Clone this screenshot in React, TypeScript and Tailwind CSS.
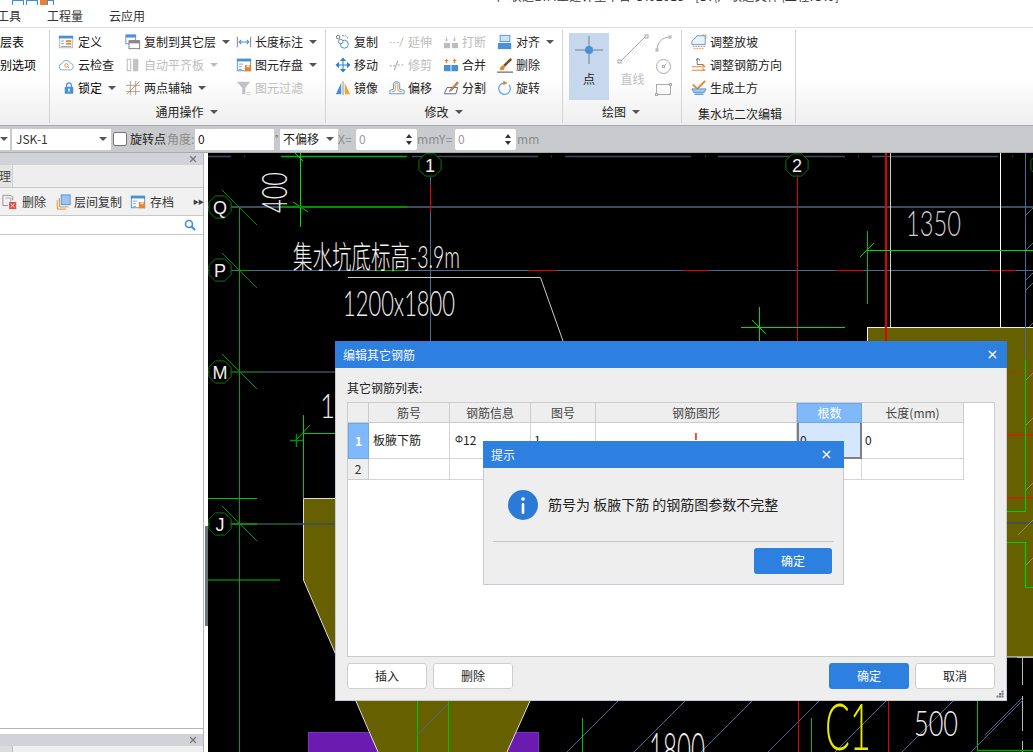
import { ReactNode } from "react";
import { X } from "lucide-react";

const BLUE = "#4a90d9";
const ORANGE = "#e8842c";
const GRAY = "#b4b4b4";

function Svg({ children, size = 18 }: { children: ReactNode; size?: number }) {
  return (
    <svg width={size} height={size} viewBox="0 0 18 18" fill="none" className="shrink-0">
      {children}
    </svg>
  );
}

const icons: Record<string, ReactNode> = {
  define: (
    <>
      <rect x="1.5" y="2.5" width="15" height="13" fill="#fff" stroke="#a9b4c0" />
      <rect x="1" y="2" width="16" height="3" fill={BLUE} />
      <rect x="9" y="7" width="6" height="2" fill={ORANGE} />
      <rect x="9" y="10" width="6" height="2" fill={ORANGE} />
      <path d="M3 8h4M3 11h4M3 14h12" stroke="#8a9aa8" />
    </>
  ),
  cloud: (
    <>
      <path d="M5 14.5a3.5 3.5 0 0 1-.5-7A5 5 0 0 1 14 7a3.8 3.8 0 0 1 0 7.5z" stroke="#62a6e4" fill="#fff" />
      <circle cx="9.5" cy="9.5" r="2" stroke={ORANGE} />
      <path d="M11 11l1.5 1.5" stroke={ORANGE} />
    </>
  ),
  lock: (
    <>
      <path d="M6 8V5.5a3 3 0 0 1 6 0V8" stroke={BLUE} strokeWidth="1.5" />
      <rect x="3.5" y="7.5" width="11" height="9" rx="1.5" fill={BLUE} />
      <circle cx="9" cy="11" r="1.4" fill="#fff" />
      <rect x="8.4" y="11" width="1.2" height="3" fill="#fff" />
    </>
  ),
  copyFloor: (
    <>
      <rect x="1" y="1" width="11" height="10" fill="#fff" stroke={BLUE} />
      <rect x="1" y="1" width="11" height="3" fill={BLUE} />
      <rect x="4.5" y="7.5" width="12" height="9" fill="#fff" stroke="#777" />
      <rect x="4.5" y="7.5" width="12" height="3" fill="#888" />
    </>
  ),
  autoAlign: (
    <>
      <rect x="2.5" y="2.5" width="4" height="13" stroke={GRAY} fill="#fff" />
      <rect x="9" y="2" width="6" height="14" fill="#c4c4c4" />
    </>
  ),
  twoPoint: (
    <>
      <path d="M1 6h16M1 13h16M6 1v16M12 1v16" stroke="#8a8a8a" strokeWidth=".8" />
      <path d="M2 16L16 2" stroke={ORANGE} />
    </>
  ),
  lengthDim: (
    <>
      <path d="M1.5 3v12M16.5 3v12" stroke="#6a7a8a" />
      <path d="M3.5 9h11M6 6.5L3.5 9 6 11.5M12 6.5L14.5 9 12 11.5" stroke={BLUE} strokeWidth="1.2" />
    </>
  ),
  saveElem: (
    <>
      <rect x="1.5" y="2.5" width="15" height="13" fill="#fff" stroke={BLUE} />
      <rect x="1" y="2" width="16" height="3" fill={BLUE} />
      <path d="M3 8h5M3 11h4M3 14h4" stroke="#8a9aa8" />
      <rect x="10" y="9" width="7" height="7" fill={ORANGE} />
      <rect x="12" y="9.5" width="3" height="2" fill="#fff" />
    </>
  ),
  filter: (
    <>
      <path d="M1 2h15l-5.5 7v7H7V9z" fill="#c2c2c2" />
      <path d="M12 14h4M12 16.5h4" stroke="#d0d0d0" />
    </>
  ),
  copy: (
    <>
      <circle cx="3.5" cy="3.5" r="2" stroke="#666" />
      <path d="M8 2h4l2 2v1" stroke="#666" strokeDasharray="2 1" />
      <circle cx="10.5" cy="11.5" r="4.5" stroke="#3f7fc4" />
      <circle cx="6.5" cy="8.5" r="2.5" fill="#fff" stroke="#3f7fc4" />
    </>
  ),
  extend: <path d="M1 9.5h2M5 9.5h2M9 9.5h2M12 14l4-10" stroke={GRAY} />,
  breakIcon: (
    <>
      <rect x="1" y="10" width="7" height="6" fill="#bdbdbd" />
      <rect x="10" y="10" width="7" height="6" fill="#bdbdbd" />
      <path d="M4 3v5M2.5 6L4 8l1.5-2M13 3v5M11.5 6L13 8l1.5-2" stroke="#bdbdbd" />
    </>
  ),
  align: (
    <>
      <rect x="3.5" y="1.5" width="11" height="7" fill="#cfe0f4" stroke={BLUE} />
      <rect x="1" y="10" width="15" height="7" fill={BLUE} />
    </>
  ),
  move: (
    <path
      d="M9 2v14M2 9h14M9 1.5L6.8 4h4.4zM9 16.5L6.8 14h4.4zM1.5 9L4 6.8v4.4zM16.5 9L14 6.8v4.4z"
      stroke="#2f7fd6"
      fill="#2f7fd6"
      strokeWidth="1.2"
    />
  ),
  trim: <path d="M1 10h2M5 10h2M10 9h2M14 9h2M6 15l4-11" stroke="#8f8f8f" />,
  merge: (
    <>
      <rect x="1" y="9" width="16" height="7" fill={BLUE} />
      <path d="M9 9v7" stroke="#fff" />
      <path d="M4 2v5M2 4h4M13 2v5M11 4h4" stroke={ORANGE} strokeWidth="1.4" />
    </>
  ),
  erase: (
    <>
      <path d="M7 9L15 1l2 2-8 8z" fill="#7a4a2a" />
      <path d="M4 11l3-2 2 2-1.5 3.5L3 15z" fill={ORANGE} />
      <path d="M0 17h18" stroke="#333" />
    </>
  ),
  mirror: (
    <>
      <path d="M7 3v13H1z" fill={BLUE} />
      <path d="M11 3v13h6z" fill="#f0a63a" />
      <path d="M9 1v16" stroke="#888" />
    </>
  ),
  offset: (
    <>
      <path d="M1 15.5v-4l4-1V4a3 3 0 0 1 3-2h1a3 3 0 0 1 3 2v6.5l5 1v4z" fill="#fff" stroke={BLUE} />
      <path d="M3 13.5l4-1.3V5a1.5 1.5 0 0 1 3 0v7.2l5 1.3" stroke={ORANGE} />
    </>
  ),
  split: (
    <>
      <path d="M4.5 8.500h12l-2 7h-13z" stroke="#4a5a78" fill="#fff" />
      <path d="M8 11l8-9 1.5 1.5-8 8.500L7 13z" fill={ORANGE} stroke="#555" strokeWidth=".5" />
    </>
  ),
  rotate: (
    <>
      <path d="M8 3.200a6.500 6.500 0 1 0 5.500 2.300" stroke="#62a6e4" strokeWidth="1.4" />
      <path d="M7 .5l5 3-5 2.500z" fill={ORANGE} />
    </>
  ),
  slope: (
    <>
      <path d="M1 8l6-6h9v10H1z" fill="#eaf3fc" stroke={BLUE} />
      <path d="M13 1h4v4M2 14h14M3 16.5h12" stroke={ORANGE} strokeDasharray="2 1" />
    </>
  ),
  direction: (
    <>
      <path d="M7 1.5v7h7" stroke="#666" />
      <path d="M6 4a2 2 0 0 1 4 0" stroke="#666" />
      <path d="M1 11h15M1 15h15M13 9l3 2M13 13l3 2" stroke={ORANGE} strokeWidth="1.2" />
    </>
  ),
  earth: (
    <>
      <path d="M2 5l5 5L16 1" stroke={ORANGE} strokeWidth="2" />
      <path d="M1 10h16l-2 4H3z" fill="#a8c8ea" stroke={BLUE} />
      <path d="M4 16h10" stroke={BLUE} strokeWidth="1.5" />
    </>
  ),
  docDelete: (
    <>
      <path d="M1 1.5h9l2 2V7M1 1.5V13h6" stroke="#888" />
      <path d="M4 4.5h6V9" stroke="#aaa" />
      <rect x="8" y="9" width="8" height="8" fill="#d9534f" />
      <path d="M10 11l4 4M14 11l-4 4" stroke="#fff" />
    </>
  ),
  floorCopy: (
    <>
      <rect x="7" y="1" width="10" height="11" fill="#9cc4ef" stroke={BLUE} />
      <path d="M5 4.5v10h10M2.5 7v10h10" stroke={ORANGE} />
    </>
  ),
};

function Ico({ name, size }: { name: string; size?: number }) {
  return <Svg size={size}>{icons[name]}</Svg>;
}

function Caret({ off }: { off?: boolean }) {
  return (
    <span
      className={`ml-[6px] h-0 w-0 border-x-[4px] border-t-[4px] border-x-transparent ${
        off ? "border-t-[#bbb]" : "border-t-[#555]"
      }`}
    />
  );
}

function Tool({
  icon,
  label,
  caret,
  off,
  gap = "w-[19px]",
}: {
  icon: string;
  label: string;
  caret?: boolean;
  off?: boolean;
  gap?: string;
}) {
  return (
    <div className="flex h-[23px] items-center whitespace-nowrap">
      <span className={`flex shrink-0 items-center ${gap}`}>
        <Ico name={icon} size={16} />
      </span>
      <span className={off ? "text-[#bdbdbd]" : "text-[#222]"}>{label}</span>
      {caret && <Caret off={off} />}
    </div>
  );
}

function Group({
  className,
  title,
  titleClass = "",
  caret,
  children,
}: {
  className: string;
  title: string;
  titleClass?: string;
  caret?: boolean;
  children: ReactNode;
}) {
  return (
    <div className={`mt-[2px] flex h-[93px] shrink-0 flex-col border-r border-[#d4d4d4] ${className}`}>
      <div className="h-[70px]">{children}</div>
      <div className={`flex flex-1 items-center justify-center text-[#222] ${titleClass}`}>
        {title}
        {caret && <Caret />}
      </div>
    </div>
  );
}

function Ribbon() {
  return (
    <div className="flex h-[97px] items-start bg-gradient-to-b from-white from-50% to-[#efefef] text-[12px]">
      <Group className="w-[50px]" title="">
        <div className="flex h-[23px] items-center">层表</div>
        <div className="flex h-[23px] items-center">别选项</div>
      </Group>
      <Group className="w-[276px] pl-[8px]" title="通用操作" titleClass="pr-[10px]" caret>
        <div className="grid grid-cols-[67px_111px_89px]">
          <Tool icon="define" label="定义" gap="w-[20px]" />
          <Tool icon="copyFloor" label="复制到其它层" caret />
          <Tool icon="lengthDim" label="长度标注" caret />
          <Tool icon="cloud" label="云检查" gap="w-[20px]" />
          <Tool icon="autoAlign" label="自动平齐板" caret off />
          <Tool icon="saveElem" label="图元存盘" caret />
          <div className="flex h-[23px] items-center pl-[4px]">
            <span className="flex w-[16px] items-center">
              <Ico name="lock" size={14} />
            </span>
            锁定
            <Caret />
          </div>
          <Tool icon="twoPoint" label="两点辅轴" caret />
          <Tool icon="filter" label="图元过滤" off />
        </div>
      </Group>
      <Group className="w-[237px] pl-[9px]" title="修改" titleClass="pr-[10px]" caret>
        <div className="grid grid-cols-[54px_54px_54px_60px]">
          <Tool icon="copy" label="复制" />
          <Tool icon="extend" label="延伸" off />
          <Tool icon="breakIcon" label="打断" off />
          <Tool icon="align" label="对齐" caret />
          <Tool icon="move" label="移动" />
          <Tool icon="trim" label="修剪" off />
          <Tool icon="merge" label="合并" />
          <Tool icon="erase" label="删除" />
          <Tool icon="mirror" label="镜像" />
          <Tool icon="offset" label="偏移" />
          <Tool icon="split" label="分割" />
          <Tool icon="rotate" label="旋转" />
        </div>
      </Group>
      <Group className="w-[119px] pl-[6px]" title="绘图" titleClass="pr-[8px]" caret>
        <div className="flex pt-[3px]">
          <div className="flex h-[67px] w-[40px] flex-col items-center bg-[#c7d8ee] pt-[2px]">
            <svg width="30" height="30" viewBox="0 0 30 30">
              <path d="M15 1v28M1 15h28" stroke="#6f7f90" />
              <circle cx="15" cy="15" r="4" fill={BLUE} />
            </svg>
            <span className="mt-[5px] text-[#222]">点</span>
          </div>
          <div className="ml-[6px] flex w-[35px] flex-col items-center">
            <svg width="32" height="32" viewBox="0 0 32 32">
              <path d="M3 29L29 3" stroke="#a8a8a8" />
              <rect x="1" y="27" width="3" height="3" fill="#fff" stroke="#a8a8a8" />
              <rect x="28" y="2" width="3" height="3" fill="#fff" stroke="#a8a8a8" />
            </svg>
            <span className="mt-[5px] text-[#c0c0c0]">直线</span>
          </div>
          <div className="-mt-[1px] ml-[5px] flex flex-col">
            <span className="flex h-[23px] items-center">
              <svg width="17" height="17" viewBox="0 0 17 17" fill="none" stroke="#aaa">
                <path d="M2 15C2 8 7 2 15 2" />
                <rect x="1" y="14" width="2" height="2" fill="#fff" />
                <rect x="14" y="1" width="2" height="2" fill="#fff" />
              </svg>
            </span>
            <span className="flex h-[23px] items-center">
              <svg width="17" height="17" viewBox="0 0 17 17" fill="none" stroke="#aaa">
                <circle cx="8.5" cy="8.5" r="7" />
                <path d="M8.5 8.5l3-3" />
                <rect x="7.5" y="7.5" width="2" height="2" fill="#fff" />
              </svg>
            </span>
            <span className="flex h-[23px] items-center">
              <svg width="17" height="17" viewBox="0 0 17 17" fill="none" stroke="#aaa">
                <rect x="1.5" y="3.5" width="14" height="10" />
                <rect x="14.5" y="2.5" width="2" height="2" fill="#fff" />
                <rect x=".5" y="12.5" width="2" height="2" fill="#fff" />
              </svg>
            </span>
          </div>
        </div>
      </Group>
      <Group className="w-[114px] pl-[9px]" title="集水坑二次编辑" titleClass="pr-[6px] pt-[4px]">
        <Tool icon="slope" label="调整放坡" />
        <Tool icon="direction" label="调整钢筋方向" />
        <Tool icon="earth" label="生成土方" />
      </Group>
    </div>
  );
}

function Spin({ className, value }: { className: string; value: string }) {
  return (
    <div className={`flex h-[21px] items-center justify-between rounded-[2px] bg-white pl-[3px] text-[#999] ${className}`}>
      {value}
      <span className="flex flex-col gap-[3px] pr-[5px]">
        <span className="h-0 w-0 border-x-[3px] border-b-[4px] border-x-transparent border-b-[#333]" />
        <span className="h-0 w-0 border-x-[3px] border-t-[4px] border-x-transparent border-t-[#333]" />
      </span>
    </div>
  );
}

function Combo({ className, value }: { className: string; value?: string }) {
  return (
    <div className={`flex h-[21px] items-center justify-between bg-white pl-[3px] pr-[4px] text-[#222] ${className}`}>
      <span>{value}</span>
      <span className="h-0 w-0 border-x-[4px] border-t-[4px] border-x-transparent border-t-[#555]" />
    </div>
  );
}

function OptionsBar() {
  return (
    <div className="flex h-[28px] items-center border-y border-[#a9abae] bg-[#c8cacd] text-[12px]">
      <Combo className="w-[10px] overflow-hidden !pl-0" />
      <Combo className="ml-[2px] w-[99px] !pl-[4px] !text-[#333]" value="JSK-1" />
      <span className="ml-[2px] h-[14px] w-[14px] rounded-[2px] border border-[#777] bg-white" />
      <span className="ml-[3px] text-[#222]">旋转点</span>
      <span className="ml-[1px] w-[28px] text-[#8c8c8c]">角度:</span>
      <div className="flex h-[21px] w-[79px] items-center bg-white pl-[3px] text-[#222]">0</div>
      <span className="ml-[1px] w-[5px] text-[9px] text-[#666]">°</span>
      <Combo className="w-[58px]" value="不偏移" />
      <span className="w-[18px] text-[#8c8c8c]">X=</span>
      <Spin className="w-[61px]" value="0" />
      <span className="w-[38px] text-[#8c8c8c]">mmY=</span>
      <Spin className="w-[61px]" value="0" />
      <span className="ml-[1px] text-[#8c8c8c]">mm</span>
    </div>
  );
}

function PanelHead() {
  return (
    <div className="flex h-[12px] shrink-0 items-center justify-end bg-[#d2d3d8] pr-[5px]">
      <X size={10} strokeWidth={3} className="text-[#777]" />
    </div>
  );
}

function LeftPanel() {
  return (
    <div className="flex w-[204px] shrink-0 flex-col border-r border-[#b5b5b5] bg-white text-[12px]">
      <PanelHead />
      <div className="flex h-[22px] bg-[#eeeeee]">
        <div className="flex w-[13px] items-center justify-end overflow-hidden border-r border-[#cfcfcf] bg-[#e4e4e4] pr-[1px] text-[#444]">
          <span className="shrink-0">理</span>
        </div>
      </div>
      <div className="flex h-[29px] items-center border-y border-[#c8c8c8] bg-[#f1f1f1] pl-[2px] text-[#333]">
        <Ico name="docDelete" size={16} />
        <span className="ml-[4px] w-[33px] shrink-0">删除</span>
        <Ico name="floorCopy" size={16} />
        <span className="ml-[3px] w-[56px] shrink-0">层间复制</span>
        <Ico name="saveElem" size={16} />
        <span className="ml-[4px] w-[43px] shrink-0">存档</span>
        <span className="text-[6px] leading-none tracking-[-1px] text-[#444]">▶▶</span>
      </div>
      <div className="flex h-[19px] items-center justify-end border-b border-[#c8c8c8] pr-[7px]">
        <svg width="12" height="12" viewBox="0 0 12 12" fill="none" stroke="#3f8fd8" strokeWidth="1.6">
          <circle cx="5" cy="5" r="3.5" />
          <path d="M7.5 7.5L11 11" strokeWidth="2" />
        </svg>
      </div>
      <div className="flex-1 border-b border-[#b5b5b5]" />
      <div className="h-[5px] shrink-0" />
      <PanelHead />
      <div className="flex h-[6px] shrink-0 bg-[#eeeeee]">
        <div className="w-[13px] border-r border-[#bdbdbd] bg-[#dcdcdc]" />
      </div>
    </div>
  );
}

const SLATE = "#3c4c60";
const LINE = "#4a6a96";
const DK = "#078a07";
const BR = "#00e000";

function Axis({ x, y, label }: { x: number; y: number; label: string }) {
  const r = 12;
  const pts = Array.from({ length: 8 }, (_, i) => {
    const a = (Math.PI / 4) * i + Math.PI / 8;
    return `${x + r * Math.cos(a)},${y + r * Math.sin(a)}`;
  }).join(" ");
  return (
    <>
      <polygon points={pts} fill="#000" stroke="#0a7a0a" />
      <text x={x} y={y + 7} textAnchor="middle" fontSize="18" fill="#eee" fontFamily="'Liberation Sans', sans-serif">
        {label}
      </text>
    </>
  );
}

function Thin(props: { x: number; y: number; w: number; size: number; fill?: string; children: string }) {
  return (
    <text
      x={props.x}
      y={props.y}
      fontSize={props.size}
      textLength={props.w}
      lengthAdjust="spacingAndGlyphs"
      fill={props.fill ?? "#f2f2f2"}
      fontWeight={300}
      fontFamily="'Lato', 'Noto Sans CJK SC', sans-serif"
    >
      {props.children}
    </text>
  );
}

function Canvas() {
  const dashes = [
    [208, 231],
    [412, 538],
    [565, 691],
    [718, 845],
    [872, 998],
  ];
  const dots = [244, 551, 705, 858, 1012];
  const hatch = [619, 686, 753, 820, 887, 954, 1023];
  return (
    <svg viewBox="208 153 825 599" className="block h-full w-full bg-black">
      {dashes.map(([a, b]) => (
        <path key={a} d={`M${a} 156.5H${b}`} stroke={SLATE} strokeWidth="1.5" />
      ))}
      {dots.map((d) => (
        <path key={d} d={`M${d} 156.5h1`} stroke={SLATE} strokeWidth="1.5" />
      ))}
      <path d="M281 156.5H407" stroke="#00b000" strokeWidth="1.5" />
      <path d="M300.5 153V227M295 153l8 8M293 202l15 10" stroke={BR} fill="none" />

      <path d="M208 207H1033" stroke={SLATE} strokeWidth="2" />
      <path d="M281 207H407" stroke="#009000" strokeWidth="2" />
      <path d="M208 270.5H1033" stroke={LINE} />
      <path d="M208 372H335" stroke={SLATE} strokeWidth="1.5" />
      <path d="M230 372H263" stroke="#0a5a0a" strokeWidth="1.5" />

      <path d="M239.5 207V752" stroke="#00a000" />
      <path d="M222 190l35 35M222 253l35 35M222 354l35 35M222 506l35 35" stroke={DK} />
      <path d="M239 270.5H249M376 270.5H402" stroke="#00a000" />
      <path d="M529 270.5H556M683 270.5H709M836 270.5H863M989 270.5H1016" stroke="#e00000" />

      <path d="M430.5 177V341" stroke={LINE} />
      <path d="M430.5 185V212" stroke="#e00000" />
      <path d="M797.5 177V341" stroke="#e00000" />

      <path d="M886 153V341" stroke="#e00000" strokeWidth="2" />
      <path d="M890.5 153V327" stroke="#ccc" />
      <path d="M1000.5 153V327" stroke="#fff" />
      <path d="M1025.5 153V360" stroke={LINE} />

      <path d="M867 250.5H1033" stroke={BR} />
      <path d="M867.5 231V304" stroke="#00c000" />
      <path d="M860 257l14-14" stroke={BR} />
      <path d="M741 327.5H845M759.5 307V341M752 320l14 14" stroke={BR} fill="none" />

      <path d="M1026 215l7-7M1026 250l7-7M1026 290l7-7M1026 330l7-7M1026 280l7-7" stroke={LINE} />

      <rect x="867.5" y="327.5" width="170" height="329.5" fill="#666000" stroke="#eee" />
      <path d="M886 327V341" stroke="#e00000" strokeWidth="2" />
      <path d="M1007 372H1033" stroke="#a83a10" strokeDasharray="12 3" />
      <path d="M1007 435H1033M1007 498H1033" stroke="#d02000" strokeWidth="1.5" />
      <path d="M1025.5 320V360" stroke={LINE} />
      <path d="M1025.5 360V511.5H1007" stroke="#00d000" fill="none" />
      <path d="M1007 523H1033" stroke={SLATE} strokeWidth="1.5" />
      <path d="M1007 542.5H1025.5V587.5H1033" stroke="#00d000" fill="none" strokeWidth="1.2" />
      <path d="M1026 380l7-7M1026 425l7-7M1026 490l7-7M1018 535l15-15M1026 565l7-7" stroke="#8a8a70" />

      <path d="M1017 657.5H1033" stroke="#bbb" />
      <path d="M1022.5 658V685M1022.5 696V731M1022.5 741V752" stroke="#bbb" />
      <path d="M985 735l37-37" stroke={LINE} />
      <path d="M977 750.5H1033" stroke="#00a000" strokeWidth="1.5" />
      <path d="M977.5 701V750" stroke="#00c000" />

      <path d="M303.5 415V498M303 433.5H335M296 440l14-15" stroke="#00d000" fill="none" />
      <path d="M290 440.5H303M296.5 434V447" stroke="#0a8a0a" strokeWidth="1.5" fill="none" />
      <path d="M208 498.5H257M208 580H280" stroke="#00c000" />

      <rect x="308.5" y="732.5" width="230" height="30" fill="#6a1cb0" stroke="#7a30c0" />
      <polygon points="303.5,498.5 420,498.5 530,640 530,701 507,752 378,752 303.5,580" fill="#666000" />
      <path d="M335 498.5H303.5V580L378 752M530 701L507 752" stroke="#ddd" fill="none" />
      <path d="M208 524H335" stroke={SLATE} strokeWidth="1.5" />
      <path d="M208 524H257" stroke="#00a000" strokeWidth="1.5" />
      <path d="M275 524H290" stroke="#0a5a0a" strokeWidth="1.5" />
      <path d="M417.5 701V752M448.5 701V752" stroke="#00c000" />
      <path d="M417 735l31-31" stroke={LINE} />

      {hatch.map((h) => (
        <path key={h} d={`M${h} 700L${h - 52} 752`} stroke={LINE} />
      ))}

      <path d="M582.5 718V752M811.5 718V752" stroke="#00c000" />
      <path d="M798.5 700V752M888.5 700V752" stroke="#e00000" />

      <Axis x={220} y={207} label="Q" />
      <Axis x={220} y={270} label="P" />
      <Axis x={220} y={372} label="M" />
      <Axis x={220} y={524} label="J" />
      <Axis x={430} y={165} label="1" />
      <Axis x={797} y={165} label="2" />
      <Axis x={1042} y={165} label="" />

      <g transform="rotate(-90 287 213)">
        <Thin x={287} y={213} w={41} size={36} fill="#eee">
          400
        </Thin>
      </g>
      <Thin x={293} y={268} w={167} size={31}>
        集水坑底标高-3.9m
      </Thin>
      <path d="M348 277.5H540.5L563 341" stroke="#ccc" fill="none" />
      <Thin x={343} y={316} w={112} size={36} fill="#eee">
        1200x1800
      </Thin>
      <Thin x={906} y={236} w={55} size={36} fill="#ccc">
        1350
      </Thin>
      <Thin x={320} y={418} w={30} size={34}>
        10
      </Thin>
      <Thin x={914} y={736} w={44} size={36} fill="#eee">
        500
      </Thin>
      <Thin x={649} y={767} w={56} size={48} fill="#eee">
        1800
      </Thin>
      <Thin x={825} y={750} w={46} size={66} fill="#e8e800">
        C1
      </Thin>
    </svg>
  );
}

function TitleBar({ title, closeRight }: { title: string; closeRight: string }) {
  return (
    <div className="flex h-[27px] items-center justify-between bg-[#2d7fe0] pl-[8px] text-[12px] text-[#f4f8ff]">
      {title}
      <X size={13} strokeWidth={2.5} className={`text-white ${closeRight}`} />
    </div>
  );
}

const HEAD = "flex items-center justify-center border-r border-b border-[#cccccc] bg-[#eeeeee] text-[#444]";
const CELL = "flex items-center border-r border-b border-[#d4d4d4] bg-white px-[3px] pb-[2px] text-[#222]";

function Btn({ children, primary, className = "" }: { children: string; primary?: boolean; className?: string }) {
  return (
    <button
      type="button"
      className={`flex h-[26px] w-[80px] items-center justify-center rounded-[3px] text-[12px] ${
        primary ? "bg-[#2d7fe0] text-white" : "border border-[#cfcfcf] bg-white text-[#222]"
      } ${className}`}
    >
      {children}
    </button>
  );
}

function RebarDialog() {
  return (
    <div className="absolute left-[335px] top-[341px] flex h-[360px] w-[672px] flex-col border-x border-b border-[#c5cad5] bg-[#eeeeee] text-[12px]">
      <div className="-mx-[1px]">
        <TitleBar title="编辑其它钢筋" closeRight="mr-[8px]" />
      </div>
      <div className="flex h-[34px] items-center pl-[11px] pt-[6px] text-[#222]">其它钢筋列表:</div>
      <div className="mx-[11px] h-[255px] border border-[#cccccc] bg-white">
        <div className="grid w-[616px] grid-cols-[21px_81px_81px_65px_201px_65px_102px] grid-rows-[20px_36px_21px]">
          <div className={HEAD} />
          <div className={HEAD}>筋号</div>
          <div className={HEAD}>钢筋信息</div>
          <div className={HEAD}>图号</div>
          <div className={HEAD}>钢筋图形</div>
          <div className="flex items-center justify-center border border-[#6fa8ea] bg-[#7fb9f9] text-white">根数</div>
          <div className={HEAD}>长度(mm)</div>

          <div className="flex items-center justify-center border border-[#6fa8ea] bg-[#7fb9f9] font-bold text-white">1</div>
          <div className={`${CELL} !pl-[4px]`}>板腋下筋</div>
          <div className={`${CELL} !pl-[5px]`}>
            <span className="mb-[2px] text-[10px]">Φ</span>
            <span>12</span>
          </div>
          <div className={CELL}>1</div>
          <div className={`${CELL} justify-center`}>
            <span className="mb-[6px] text-[9px] font-bold text-[#e00000]">I</span>
          </div>
          <div className="flex items-center border-2 border-t-0 border-[#808080] bg-[#d4e7fd] pl-[1px] text-[#222]">0</div>
          <div className={CELL}>0</div>

          <div className="flex items-center justify-center border-r border-b border-[#cccccc] bg-[#eeeeee] text-[#333]">2</div>
          <div className={CELL} />
          <div className={CELL} />
          <div className={CELL} />
          <div className={CELL} />
          <div className={CELL} />
          <div className={CELL} />
        </div>
      </div>
      <div className="flex justify-between px-[11px] pt-[6px]">
        <div className="flex gap-[6px]">
          <Btn>插入</Btn>
          <Btn>删除</Btn>
        </div>
        <div className="flex gap-[6px]">
          <Btn primary>确定</Btn>
          <Btn>取消</Btn>
        </div>
      </div>
      <svg width="8" height="8" viewBox="0 0 8 8" className="absolute bottom-[2px] right-[2px]" fill="#777">
        <rect x="5.5" y=".5" width="2" height="2" />
        <rect x="3" y="3" width="2" height="2" />
        <rect x="5.5" y="3" width="2" height="2" />
        <rect x=".5" y="5.5" width="2" height="2" />
        <rect x="3" y="5.5" width="2" height="2" />
        <rect x="5.5" y="5.5" width="2" height="2" />
      </svg>
    </div>
  );
}

function AlertDialog() {
  return (
    <div className="absolute left-[483px] top-[441px] flex h-[144px] w-[361px] flex-col border-x border-b border-[#c5cad5] bg-[#eeeeee] text-[12px]">
      <div className="-mx-[1px]">
        <TitleBar title="提示" closeRight="mr-[11px]" />
      </div>
      <div className="mx-[9px] flex h-[74px] items-center whitespace-nowrap border-b border-[#c5c7cc] pl-[15px] text-[14px] text-[#222]">
        <svg width="30" height="30" viewBox="0 0 30 30" className="mr-[10px]">
          <circle cx="15" cy="15" r="15" fill="#2a7ad6" />
          <circle cx="15" cy="9" r="1.8" fill="#fff" />
          <rect x="13.7" y="13" width="2.6" height="11" rx="1.3" fill="#fff" />
        </svg>
        筋号为 板腋下筋 的钢筋图参数不完整
      </div>
      <div className="flex justify-end pr-[11px] pt-[6px]">
        <Btn primary className="!w-[78px]">
          确定
        </Btn>
      </div>
    </div>
  );
}

export default function App() {
  return (
    <div className="relative flex h-[752px] w-[1033px] flex-col overflow-hidden bg-white font-['Noto_Sans_CJK_SC','Liberation_Sans',sans-serif] text-[12px]">
      <div className="flex h-[5px] shrink-0 overflow-hidden">
        <div className="flex h-[5px] items-start pl-[12px]">
          <span className="h-[9px] w-[12px] border border-[#3f8fd8]" />
          <span className="ml-[2px] h-[9px] w-[12px] border border-[#3f8fd8]" />
          <span className="ml-[2px] h-[9px] w-[7px] bg-[#e8842c]" />
          <span className="h-[9px] w-[7px] border border-[#3f8fd8]" />
        </div>
        <div className="-mt-[13px] ml-[443px] whitespace-nowrap tracking-[0.45px] text-[#333]">广联达BIM土建计量平台 GTJ2018 - [D:\广联达文件\工程.GTJ]</div>
      </div>
      <div className="flex h-[23px] shrink-0 items-center border-b border-[#dddddd] text-[#333]">
        <span className="-ml-[3px] w-[50px]">工具</span>
        <span className="w-[62px]">工程量</span>
        <span>云应用</span>
      </div>
      <Ribbon />
      <OptionsBar />
      <div className="flex min-h-0 flex-1">
        <LeftPanel />
        <div className="w-[4px] shrink-0 bg-white pl-[1px] pt-[373px]">
          <div className="h-[100px] bg-[#6c7680]" />
        </div>
        <div className="min-w-0 flex-1">
          <Canvas />
        </div>
      </div>
      <RebarDialog />
      <AlertDialog />
    </div>
  );
}
